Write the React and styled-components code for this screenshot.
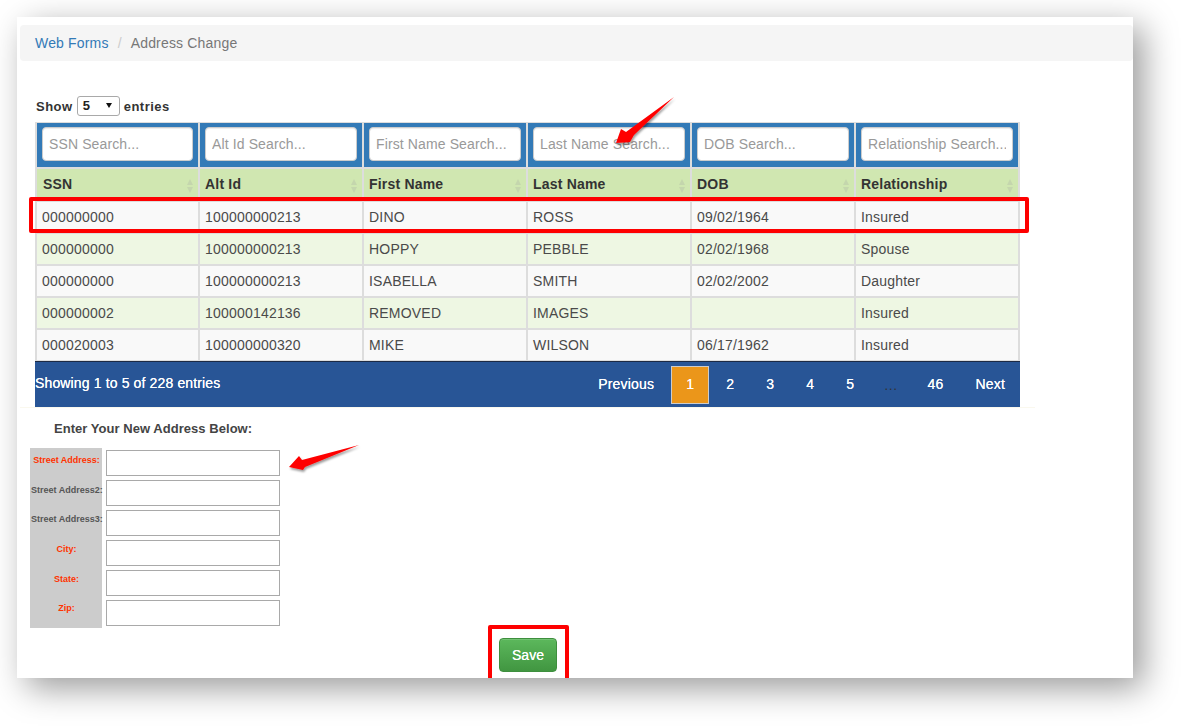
import React from "react";
import styled, { createGlobalStyle } from "styled-components";

const GlobalStyle = createGlobalStyle`
  html, body {
    margin: 0;
    padding: 0;
    background: #fff;
    font-family: "Liberation Sans", Arial, sans-serif;
    font-size: 14px;
    color: #333;
  }
`;

const Page = styled.div`
  width: 1181px;
  height: 726px;
  overflow: hidden;
  padding: 17px 0 0 17px;
  box-sizing: border-box;
`;

const Card = styled.div`
  position: relative;
  width: 1116px;
  height: 661px;
  padding-top: 8px;
  box-sizing: border-box;
  overflow: hidden;
  background: #fff;
  box-shadow: 10px 10px 32px rgba(0, 0, 0, 0.4);
`;

const Breadcrumb = styled.div`
  display: flex;
  align-items: center;
  height: 36px;
  margin-left: 3px;
  padding: 0 15px;
  gap: 9px;
  background: #f5f5f5;
  border-radius: 4px;
  line-height: 20px;
  letter-spacing: 0.17px;
`;

const Crumb = styled.span`
  color: ${(p) => (p.$link ? "#337ab7" : "#777")};
`;

const Slash = styled.span`
  color: #ccc;
`;

const Length = styled.div`
  display: flex;
  align-items: center;
  gap: 4px;
  height: 20px;
  margin: 35px 0 6px 19px;
  font-size: 13px;
  font-weight: bold;
  letter-spacing: 0.5px;
  color: #333;
`;

const LengthSelect = styled.div`
  position: relative;
  width: 43px;
  height: 20px;
  padding-left: 5px;
  box-sizing: border-box;
  line-height: 18px;
  border: 1px solid #a9a9a9;
  border-radius: 3px;
  background: #fff;
  font-weight: bold;
  color: #222;

  &::after {
    content: "";
    position: absolute;
    right: 7px;
    top: 6px;
    border-style: solid;
    border-width: 5px 3.5px 0;
    border-color: #111 transparent transparent;
  }
`;

const TableWrap = styled.div`
  width: 985px;
  margin-left: 18px;
`;

const Table = styled.table`
  width: 985px;
  border-collapse: separate;
  border-spacing: 0;
  table-layout: fixed;
`;

const FilterInput = styled.input`
  display: block;
  width: 152px;
  height: 34px;
  margin: 0 auto;
  padding: 6px 6px;
  box-sizing: border-box;
  border: 1px solid #ccc;
  border-radius: 4px;
  background: #fff;
  font-family: inherit;
  font-size: 14px;
  letter-spacing: 0.12px;
  color: #555;
  box-shadow: inset 0 1px 1px rgba(0, 0, 0, 0.075);

  &::placeholder {
    color: #999;
    opacity: 1;
  }
`;

const FilterCell = styled.td`
  width: 164px;
  height: 47px;
  padding: 0 0 2px;
  box-sizing: border-box;
  background: #337ab7;
  border: 2px solid #ddd;
  border-width: 1px 2px 2px 0;
  text-align: center;

  &:first-child {
    width: 165px;
    border-left-width: 2px;
  }

  &:first-child ${FilterInput} {
    width: 151px;
  }
`;

const HeadCell = styled.th`
  position: relative;
  height: 33px;
  padding: 0 0 2px 5px;
  box-sizing: border-box;
  background: #d0e7b1;
  border: 2px solid #ddd;
  border-width: 0 2px 2px 0;
  text-align: left;
  font-size: 14px;
  font-weight: bold;
  letter-spacing: 0.2px;
  color: #333;

  &:first-child {
    padding-left: 6px;
    border-left-width: 2px;
  }

  &::before,
  &::after {
    content: "";
    position: absolute;
    right: 5px;
    border-style: solid;
    border-color: transparent;
  }

  &::before {
    top: 10px;
    border-width: 0 3.5px 6px;
    border-bottom-color: #c4d6ad;
  }

  &::after {
    top: 18px;
    border-width: 6px 3.5px 0;
    border-top-color: #c4d6ad;
  }
`;

const BodyCell = styled.td`
  height: 32px;
  padding: 0 0 0 5px;
  box-sizing: border-box;
  background: ${(p) => (p.$even ? "#eef7e3" : "#f9f9f9")};
  border: 2px solid #ddd;
  border-width: 0 2px 2px 0;
  font-size: 14px;
  letter-spacing: 0.2px;
  color: #4a4a4a;

  &:first-child {
    border-left-width: 2px;
  }
`;

const Footer = styled.div`
  display: flex;
  align-items: center;
  justify-content: space-between;
  height: 46px;
  margin-top: -1px;
  box-sizing: border-box;
  border-top: 1px solid #1c2a44;
  background: #285596;
  color: #fff;
`;

const Info = styled.div`
  margin-top: -3px;
  font-size: 14px;
  letter-spacing: 0.14px;
  color: #fff;
  text-shadow: 0 0 0.5px #fff;
`;

const Pager = styled.div`
  display: flex;
  align-items: center;
  letter-spacing: 0.2px;
`;

const PageButton = styled.a`
  display: block;
  margin-left: 2px;
  padding: 0 14px;
  height: 36px;
  line-height: 35px;
  border: 1px solid ${(p) => (p.$active ? "#ccc" : "transparent")};
  background: ${(p) => (p.$active ? "#eb961a" : "transparent")};
  color: #fff;
  font-size: 14px;
  text-shadow: 0 0 0.5px #fff;
`;

const Ellipsis = styled.span`
  margin-left: 2px;
  padding: 0 12.5px;
  color: #333;
  font-size: 14px;
`;

const Divider = styled.div`
  width: 1015px;
  height: 1px;
  margin-left: 3px;
  background: #faf8ee;
`;

const FormTitle = styled.div`
  margin: 13px 0 0 37px;
  height: 15px;
  line-height: 15px;
  font-size: 13px;
  font-weight: bold;
  letter-spacing: 0.04px;
  color: #444;
`;

const FormRow = styled.div`
  display: flex;
  margin: 12px 0 0 13px;
`;

const Labels = styled.div`
  display: flex;
  flex-direction: column;
  width: 72px;
  height: 180px;
  padding-top: 2px;
  box-sizing: border-box;
  background: #ccc;
`;

const FieldLabel = styled.div`
  height: 30px;
  padding: 5px 0 0 1px;
  box-sizing: border-box;
  text-align: center;
  white-space: nowrap;
  font-size: 9px;
  line-height: 11px;
  font-weight: bold;
  color: ${(p) => (p.$required ? "#ff3300" : "#555")};
`;

const Fields = styled.div`
  display: flex;
  flex-direction: column;
  gap: 4px;
  margin: 2px 0 0 4px;
`;

const FieldInput = styled.input`
  display: block;
  width: 174px;
  height: 26px;
  padding: 0 4px;
  box-sizing: border-box;
  border: 1px solid #a9a9a9;
  background: #fff;
`;

const SaveButton = styled.button`
  display: block;
  width: 58px;
  height: 34px;
  margin: 10px 0 0 482px;
  padding: 0;
  border: 1px solid #3e8f3e;
  border-radius: 4px;
  background: linear-gradient(to bottom, #5cb85c 0%, #419641 100%);
  box-shadow: inset 0 1px 0 rgba(255, 255, 255, 0.15);
  font-family: inherit;
  font-size: 14px;
  font-weight: normal;
  color: #fff;
  text-shadow: 0 0 0.6px #fff;
`;

const RedBox = styled.div`
  position: absolute;
  left: ${(p) => p.$left}px;
  top: ${(p) => p.$top}px;
  width: ${(p) => p.$width}px;
  height: ${(p) => p.$height}px;
  box-sizing: border-box;
  border: 4.5px solid #fe0000;
  border-radius: 2px;
`;

const Annotations = styled.svg`
  position: absolute;
  left: 0;
  top: 0;
  width: 1116px;
  height: 661px;
  overflow: visible;
  pointer-events: none;
`;

const columns = ["SSN", "Alt Id", "First Name", "Last Name", "DOB", "Relationship"];

const rows = [
  ["000000000", "100000000213", "DINO", "ROSS", "09/02/1964", "Insured"],
  ["000000000", "100000000213", "HOPPY", "PEBBLE", "02/02/1968", "Spouse"],
  ["000000000", "100000000213", "ISABELLA", "SMITH", "02/02/2002", "Daughter"],
  ["000000002", "100000142136", "REMOVED", "IMAGES", "", "Insured"],
  ["000020003", "100000000320", "MIKE", "WILSON", "06/17/1962", "Insured"],
];

const fields = [
  { label: "Street Address:", required: true },
  { label: "Street Address2:" },
  { label: "Street Address3:" },
  { label: "City:", required: true },
  { label: "State:", required: true },
  { label: "Zip:", required: true },
];

const App = () => {
  return (
    <Page>
      <GlobalStyle />
      <Card>
        <Breadcrumb>
          <Crumb $link>Web Forms</Crumb>
          <Slash>/</Slash>
          <Crumb>Address Change</Crumb>
        </Breadcrumb>

        <Length>
          Show <LengthSelect>5</LengthSelect> entries
        </Length>

        <TableWrap>
          <Table>
            <thead>
              <tr>
                {columns.map((c) => (
                  <FilterCell key={c}>
                    <FilterInput placeholder={`${c} Search...`} />
                  </FilterCell>
                ))}
              </tr>
              <tr>
                {columns.map((c) => (
                  <HeadCell key={c}>{c}</HeadCell>
                ))}
              </tr>
            </thead>
            <tbody>
              {rows.map((row, i) => (
                <tr key={i}>
                  {row.map((v, j) => (
                    <BodyCell key={j} $even={i % 2 === 1}>
                      {v}
                    </BodyCell>
                  ))}
                </tr>
              ))}
            </tbody>
          </Table>
          <Footer>
            <Info>Showing 1 to 5 of 228 entries</Info>
            <Pager>
              <PageButton>Previous</PageButton>
              <PageButton $active>1</PageButton>
              <PageButton>2</PageButton>
              <PageButton>3</PageButton>
              <PageButton>4</PageButton>
              <PageButton>5</PageButton>
              <Ellipsis>…</Ellipsis>
              <PageButton>46</PageButton>
              <PageButton>Next</PageButton>
            </Pager>
          </Footer>
        </TableWrap>
        <Divider />

        <FormTitle>Enter Your New Address Below:</FormTitle>
        <FormRow>
          <Labels>
            {fields.map((f) => (
              <FieldLabel key={f.label} $required={f.required}>
                {f.label}
              </FieldLabel>
            ))}
          </Labels>
          <Fields>
            {fields.map((f) => (
              <FieldInput key={f.label} />
            ))}
          </Fields>
        </FormRow>

        <SaveButton>Save</SaveButton>

        <RedBox $left={12} $top={180} $width={1000} $height={36} />
        <RedBox $left={471} $top={608} $width={81} $height={70} />

        <Annotations viewBox="0 0 1116 661">
          <defs>
            <filter id="arrowShadow" x="-30%" y="-30%" width="160%" height="160%">
              <feDropShadow dx="1" dy="2" stdDeviation="1.2" floodColor="#000" floodOpacity="0.4" />
            </filter>
          </defs>
          <polygon
            points="657,80 617,118 613,125 599,126 604,112 609,115"
            fill="#fe0000"
            filter="url(#arrowShadow)"
          />
          <polygon
            points="342,428 288,450 286,453 272,450 282,439 285,443"
            fill="#fe0000"
            filter="url(#arrowShadow)"
          />
        </Annotations>
      </Card>
    </Page>
  );
};

export default App;
